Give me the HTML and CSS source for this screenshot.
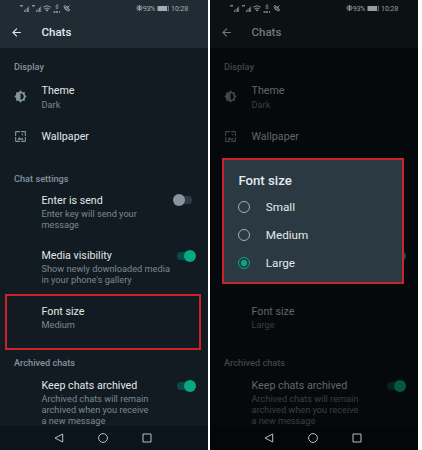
FILE: index.html
```html
<!DOCTYPE html>
<html lang="en">
<head>
    <meta charset="UTF-8">
    <meta name="viewport" content="width=device-width, initial-scale=1.0">
    <title>Chats</title>
    <link rel="stylesheet" href="styles.css">
</head>
<body>
    <svg class="sprite" width="0" height="0">
        <symbol id="signals" viewBox="0 0 50 12">
            <g fill="currentColor">
                <path d="M0 3h3v1.500H0zM4 10V8.500l1-.5v2zM5.500 10V7l1-.6V10zM7 10V6l1-.6V10zM8.300 10V4.800l.8-.6V10z" opacity=".8"/>
                <path d="M12 3h3v1.500h-3zM16 10V8.500l1-.5v2zM17.500 10V7l1-.6V10zM19 10V6l1-.6V10zM20.300 10V4.800l.8-.6V10z" opacity=".8"/>
                <path d="M25.500 8L27 9.500 28.500 8q-1.500-1-3 0z"/>
                <path d="M36 9h2v2h-2zM39 9h1v2h-1zM33.500 9h2v2h-2z" opacity=".7"/>
            </g>
            <g fill="none" stroke="currentColor" stroke-width=".9">
                <path d="M23.300 5.200q3.700-3 7.400 0M24.500 7q2.500-2 5 0"/>
                <path d="M36.200 3h1.600v3.500h-1.600z" opacity=".7"/>
                <path d="M44 4.500q.5 4 5 4.500l.5-1.500-2-.8-1 .8-1.200-1.700.8-1-1-1.500zM47 6l2.500-2.500M47 4v2h2"/>
            </g>
        </symbol>
        <symbol id="eye" viewBox="0 0 7 8">
            <path d="M.5 4Q3.500.8 6.500 4 3.500 7.200.5 4zM3.500.8v6.400M1.300 1.500l4.400 5M5.700 1.500l-4.400 5" fill="none" stroke="currentColor" stroke-width=".8"/>
        </symbol>
        <symbol id="battery" viewBox="0 0 12 7">
            <path d="M.5 1h9.500v5H.5z" fill="currentColor"/>
            <path d="M10.500 1h.8v5h-.8" fill="none" stroke="currentColor" stroke-width=".7"/>
        </symbol>
        <symbol id="back" viewBox="0 0 24 24">
            <path d="M20 11H7.830l5.590-5.590L12 4l-8 8 8 8 1.410-1.410L7.830 13H20z" fill="currentColor"/>
        </symbol>
        <symbol id="theme" viewBox="0 0 24 24">
            <path d="M20 15.310L23.310 12 20 8.690V4h-4.690L12 .69 8.690 4H4v4.690L.69 12 4 15.310V20h4.690L12 23.310 15.310 20H20zM12 18V6c3.310 0 6 2.690 6 6s-2.690 6-6 6z" fill="currentColor"/>
        </symbol>
        <symbol id="wallpaper" viewBox="0 0 24 24">
            <path d="M4 4h7V2H4c-1.100 0-2 .9-2 2v7h2zm6 9l-4 5h12l-3-4-2.030 2.710zm7-4.500c0-.83-.67-1.500-1.500-1.500S14 7.670 14 8.500s.67 1.500 1.500 1.500S17 9.330 17 8.500zM20 2h-7v2h7v7h2V4c0-1.100-.9-2-2-2zm0 18h-7v2h7c1.100 0 2-.9 2-2v-7h-2zM4 13H2v7c0 1.100.9 2 2 2h7v-2H4z" fill="currentColor"/>
        </symbol>
        <symbol id="nav-back" viewBox="0 0 10 10">
            <path d="M8.700 1v8L1 5z" fill="none" stroke="currentColor"/>
        </symbol>
        <symbol id="nav-home" viewBox="0 0 10 10">
            <circle cx="5" cy="5" r="4.400" fill="none" stroke="currentColor"/>
        </symbol>
        <symbol id="nav-recent" viewBox="0 0 10 10">
            <path d="M1 1h8v8H1z" fill="none" stroke="currentColor"/>
        </symbol>
    </svg>

    <div class="screens">
        <div class="phone">
            <div class="top">
                <div class="status-bar">
                    <svg class="signals"><use href="#signals"/></svg>
                    <div class="status-right">
                        <svg class="eye"><use href="#eye"/></svg>
                        <span class="percent">93%</span>
                        <svg class="battery"><use href="#battery"/></svg>
                        <span class="clock">10:28</span>
                    </div>
                </div>
                <div class="app-bar">
                    <svg class="back"><use href="#back"/></svg>
                    <h1 class="title">Chats</h1>
                </div>
            </div>
            <div class="settings">
                <div class="section">Display</div>
                <div class="row row-theme">
                    <svg class="icon"><use href="#theme"/></svg>
                    <div class="text">
                        <div class="name">Theme</div>
                        <div class="desc">Dark</div>
                    </div>
                </div>
                <div class="row row-wallpaper">
                    <svg class="icon"><use href="#wallpaper"/></svg>
                    <div class="text"><div class="name">Wallpaper</div></div>
                </div>
                <div class="section">Chat settings</div>
                <div class="row row-enter">
                    <div class="text">
                        <div class="name">Enter is send</div>
                        <div class="desc">Enter key will send your<br>message</div>
                    </div>
                    <div class="switch"></div>
                </div>
                <div class="row row-media">
                    <div class="text">
                        <div class="name">Media visibility</div>
                        <div class="desc">Show newly downloaded media<br>in your phone's gallery</div>
                    </div>
                    <div class="switch on"></div>
                </div>
                <div class="row row-font highlight">
                    <div class="text">
                        <div class="name">Font size</div>
                        <div class="desc">Medium</div>
                    </div>
                </div>
                <div class="section">Archived chats</div>
                <div class="row row-archived">
                    <div class="text">
                        <div class="name">Keep chats archived</div>
                        <div class="desc">Archived chats will remain<br>archived when you receive<br>a new message</div>
                    </div>
                    <div class="switch on"></div>
                </div>
            </div>
            <div class="nav-bar">
                <svg><use href="#nav-back"/></svg>
                <svg><use href="#nav-home"/></svg>
                <svg><use href="#nav-recent"/></svg>
            </div>
        </div>

        <div class="phone dimmed">
            <div class="top">
                <div class="status-bar">
                    <svg class="signals"><use href="#signals"/></svg>
                    <div class="status-right">
                        <svg class="eye"><use href="#eye"/></svg>
                        <span class="percent">93%</span>
                        <svg class="battery"><use href="#battery"/></svg>
                        <span class="clock">10:28</span>
                    </div>
                </div>
                <div class="app-bar">
                    <svg class="back"><use href="#back"/></svg>
                    <h1 class="title">Chats</h1>
                </div>
            </div>
            <div class="settings">
                <div class="section">Display</div>
                <div class="row row-theme">
                    <svg class="icon"><use href="#theme"/></svg>
                    <div class="text">
                        <div class="name">Theme</div>
                        <div class="desc">Dark</div>
                    </div>
                </div>
                <div class="row row-wallpaper">
                    <svg class="icon"><use href="#wallpaper"/></svg>
                    <div class="text"><div class="name">Wallpaper</div></div>
                </div>
                <div class="behind-dialog">
                    <div class="switch on"></div>
                </div>
                <div class="row row-font">
                    <div class="text">
                        <div class="name">Font size</div>
                        <div class="desc">Large</div>
                    </div>
                </div>
                <div class="section">Archived chats</div>
                <div class="row row-archived">
                    <div class="text">
                        <div class="name">Keep chats archived</div>
                        <div class="desc">Archived chats will remain<br>archived when you receive<br>a new message</div>
                    </div>
                    <div class="switch on"></div>
                </div>
            </div>
            <div class="nav-bar">
                <svg><use href="#nav-back"/></svg>
                <svg><use href="#nav-home"/></svg>
                <svg><use href="#nav-recent"/></svg>
            </div>

            <div class="dialog">
                <h2 class="dialog-title">Font size</h2>
                <div class="option"><span class="radio"></span>Small</div>
                <div class="option"><span class="radio"></span>Medium</div>
                <div class="option"><span class="radio checked"></span>Large</div>
            </div>
        </div>
    </div>
</body>
</html>
```

FILE: styles.css
```css
* {
    margin: 0;
    padding: 0;
    box-sizing: border-box;
}

body {
    font-family: Roboto, "Liberation Sans", sans-serif;
    background: #fff;
    overflow: hidden;
}

.sprite {
    display: block;
}

.screens {
    display: flex;
    gap: 2px;
    height: 450px;
}

.phone {
    --header: #1f2c34;
    --page: #111b21;
    --nav: #0b141a;
    --status: #a4adb2;
    --title: #e4e9eb;
    --name: #e2e7ea;
    --desc: #7b8890;
    --section: #8593a0;
    --icon: #82959f;
    --thumb: #8795a0;
    --track: #2f3b43;
    --thumb-on: #06a884;
    --track-on: #0b4a40;
    --nav-icon: #b9bec1;
    position: relative;
    display: flex;
    flex-direction: column;
    width: 208px;
    height: 450px;
    background: var(--page);
}

.phone.dimmed {
    --header: #0c1114;
    --page: #06090c;
    --nav: #04070a;
    --status: #969da0;
    --title: #747879;
    --name: #626668;
    --desc: #3a3f42;
    --section: #3f4549;
    --icon: #3e464a;
    --thumb-on: #04583f;
    --track-on: #05231c;
}

/* header */

.top {
    height: 48px;
    background: var(--header);
}

.status-bar {
    display: flex;
    justify-content: space-between;
    align-items: center;
    height: 16px;
    padding: 0 20px;
    color: var(--status);
    font-size: 7.2px;
}

.signals {
    width: 50px;
    height: 12px;
}

.status-right {
    display: flex;
    align-items: center;
}

.percent {
    letter-spacing: -0.3px;
}

.clock {
    letter-spacing: -0.2px;
}

.eye {
    width: 7px;
    height: 8px;
}

.battery {
    width: 12px;
    height: 7px;
    margin: 0 2px;
}

.app-bar {
    display: flex;
    align-items: center;
    height: 32px;
    padding-left: 10px;
    color: var(--title);
}

.back {
    width: 13px;
    height: 13px;
}

.title {
    margin-left: 18.5px;
    font-size: 11.5px;
    font-weight: 500;
}

/* settings list */

.settings {
    height: 378px;
    padding-top: 6px;
    overflow: hidden;
}

.section {
    height: 22px;
    padding: 6px 0 0 14px;
    color: var(--section);
    font-size: 9.2px;
    font-weight: 500;
    line-height: 14px;
}

.row {
    display: flex;
    position: relative;
    padding-left: 41.5px;
}

.row .icon {
    position: absolute;
    left: 14px;
    top: 12px;
    width: 13px;
    height: 13px;
    color: var(--icon);
}

.text {
    flex: 1;
}

.name {
    color: var(--name);
    font-size: 10.7px;
    line-height: 14px;
    white-space: nowrap;
}

.desc {
    color: var(--desc);
    font-size: 9.2px;
    line-height: 11px;
    white-space: nowrap;
}

.row-theme {
    height: 42px;
    padding-top: 8px;
}

.row-theme .icon {
    top: 14px;
}

.row-theme .desc {
    margin-top: 1px;
}

.row-wallpaper {
    height: 48px;
    padding-top: 12px;
}

.row-enter {
    height: 55px;
    padding-top: 6px;
}

.row-media {
    height: 51px;
    padding-top: 6px;
}

.row-font {
    height: 56px;
    padding-top: 11px;
}

.highlight {
    margin: 0 7px 0 5px;
    padding: 9px 0 0 34.5px;
    border: 2px solid #cc222a;
}

.row-archived {
    padding-top: 7px;
}

.behind-dialog {
    display: flex;
    justify-content: flex-end;
    height: 128px;
    padding-top: 83px;
}

.switch {
    position: relative;
    width: 19px;
    height: 12px;
    margin: 0 16px 0 0;
}

.switch::before {
    content: '';
    position: absolute;
    left: 4px;
    top: 2px;
    width: 15px;
    height: 8px;
    border-radius: 4px;
    background: var(--track);
}

.switch::after {
    content: '';
    position: absolute;
    left: 0;
    top: 0;
    width: 12px;
    height: 12px;
    border-radius: 50%;
    background: var(--thumb);
}

.switch.on {
    margin: 1px 12px 0 0;
}

.switch.on::before {
    left: 0;
    background: var(--track-on);
}

.switch.on::after {
    left: 7px;
    background: var(--thumb-on);
}

/* system navigation */

.nav-bar {
    display: flex;
    gap: 34px;
    height: 24px;
    padding: 7px 0 0 54px;
    background: var(--nav);
    color: var(--nav-icon);
}

.nav-bar svg {
    width: 10px;
    height: 10px;
}

/* dialog */

.dialog {
    position: absolute;
    left: 12px;
    top: 158px;
    width: 182px;
    height: 126px;
    padding: 13px 0 0 14.4px;
    border: 2px solid #cc222a;
    background: #2a3942;
    color: #e4e9eb;
}

.dialog-title {
    margin-bottom: 4px;
    font-size: 13.2px;
    font-weight: 500;
    line-height: 16px;
}

.option {
    display: flex;
    align-items: center;
    height: 28px;
    font-size: 11.7px;
}

.radio {
    width: 12px;
    height: 12px;
    margin-right: 15.4px;
    border: 1.5px solid #a3b0b8;
    border-radius: 50%;
}

.radio.checked {
    border-color: #06a884;
    background: radial-gradient(circle, #06a884 2.8px, transparent 3.4px);
}
```
